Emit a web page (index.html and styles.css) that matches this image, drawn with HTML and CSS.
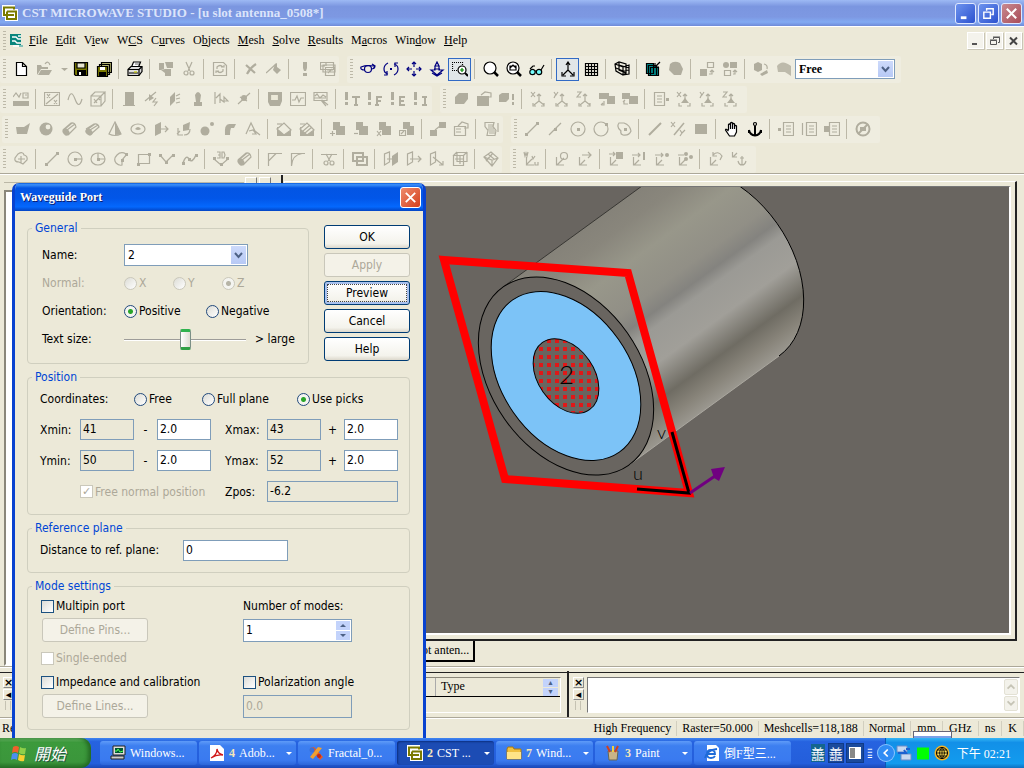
FILE: index.html
```html
<!DOCTYPE html>
<html lang="en">
<head>
<meta charset="utf-8">
<title>CST MICROWAVE STUDIO</title>
<link rel="stylesheet" href="styles.css">
</head>
<body>
<div class="app">
<header class="titlebar">
  <svg class="logo" viewBox="0 0 16 16"><path d="M0 0h13v4h3v12H3v-4H0z" fill="#fff"/><path d="M12 4.500V2.500H2v7.500h10M5 6.500v7.500h9V6.500H5" fill="none" stroke="#7b7a00" stroke-width="2"/></svg>
  <h1>CST MICROWAVE STUDIO - [u slot antenna_0508*]</h1>
  <button class="win-btn" aria-label="Minimize"><svg viewBox="0 0 16 16"><path d="M3 11h6v3H3z" fill="#fff"/></svg></button>
  <button class="win-btn" aria-label="Restore"><svg viewBox="0 0 16 16" fill="none" stroke="#fff" stroke-width="1.500"><path d="M6 5V3h7v6h-2M3 6.500h7V13H3z"/></svg></button>
  <button class="win-btn close" aria-label="Close"><svg viewBox="0 0 16 16" stroke="#fff" stroke-width="2.200"><path d="M3 3l10 10M13 3L3 13"/></svg></button>
</header>
<nav class="menubar">
  <span class="grip"></span>
  <svg class="doc-icon" viewBox="0 0 14 14"><path d="M0 0h11v11H0z" fill="#08857c"/><path d="M2 3h4l2 2h3M2 7h3l2 2h4M8 2h3M3 12h10" fill="none" stroke="#fff" stroke-width="1.300"/><path d="M9 12h4" stroke="#08857c"/></svg>
  <a href="#"><u>F</u>ile</a><a href="#"><u>E</u>dit</a><a href="#">V<u>i</u>ew</a><a href="#">W<u>C</u>S</a><a href="#">C<u>u</u>rves</a><a href="#">O<u>b</u>jects</a><a href="#"><u>M</u>esh</a><a href="#"><u>S</u>olve</a><a href="#"><u>R</u>esults</a><a href="#">M<u>a</u>cros</a><a href="#">Win<u>d</u>ow</a><a href="#"><u>H</u>elp</a>
  <div class="mdi-buttons">
    <button aria-label="Minimize document"><svg viewBox="0 0 12 12"><path d="M2 8h5v2H2z" fill="#555"/></svg></button>
    <button aria-label="Restore document"><svg viewBox="0 0 12 12" fill="none" stroke="#555"><path d="M4.500 4V2.500h6v5H9M4 2h7M1.500 5.500h6v4h-6zM1 5h7"/></svg></button>
    <button aria-label="Close document"><svg viewBox="0 0 12 12" stroke="#444" stroke-width="2"><path d="M2 2.500l7 7M9 2.500l-7 7"/></svg></button>
  </div>
</nav>

<div class="toolbars">
<div class="tool-row">
  <div class="toolbar"><span class="grip"></span>
    <button class="tb on" aria-label="New"><svg viewBox="0 0 16 16"><path d="M3.500 1.500h6l4 4v9h-10zM9.500 1.500v4h4" fill="#fff"/></svg></button>
    <button class="tb" disabled aria-label="Open"><svg viewBox="0 0 16 16"><path class="f" d="M1 4h4l1 2h6v2H5l-4 6z"/><path class="f" d="M5 9h11l-3 5H2z"/><path d="M9 3c2-3 4-2 5 1"/></svg></button>
    <button class="tb narrow" disabled aria-label="Open recent"><svg viewBox="0 0 16 16"><path class="f" d="M5 7h7l-3.500 3z"/></svg></button>
    <button class="tb on" aria-label="Save"><svg viewBox="0 0 16 16"><path d="M1.500 1.500h13v13h-12l-1-1z" fill="#7b7a00"/><path class="f" d="M4 9h9v6H4z"/><path d="M4 2h8v5H4z" fill="#e8e6d0"/><path d="M6 11h2v3H6z" fill="#fff" stroke="none"/></svg></button>
    <button class="tb on" aria-label="Save all"><svg viewBox="0 0 16 16"><path d="M5.500 1.500h10v10h-10zM3.500 3.500h10v10h-10z" fill="#b5b470"/><path d="M1.500 5.500h10v10h-10z" fill="#7b7a00"/><path class="f" d="M3 11h7v4H3z"/><path d="M4 6h5v3H4z" fill="#fff" stroke="none"/></svg></button>
    <i class="sep"></i>
    <button class="tb on" aria-label="Print"><svg viewBox="0 0 16 16"><path d="M4.500 6l2-5h7l-2 5" fill="#fff"/><path d="M1 8.500l3-3h11v5l-3 4H1z" fill="#ddd"/><path d="M1 8.500h11v6M12 8.500l3-3M2 12h9"/><path d="M7 11h3" stroke="#cc0"/><path d="M8 3h4" stroke-width=".6"/></svg></button>
    <i class="sep"></i>
    <button class="tb" disabled aria-label="Copy"><svg viewBox="0 0 16 16"><path class="f" d="M1 2h5v7H1zM7 1h8v6H9zM7 8h6v7H7zM3 9l4 3V8z"/></svg></button>
    <button class="tb" disabled aria-label="Cut"><svg viewBox="0 0 16 16"><path d="M5 1l4 9M11 1L7 10"/><circle cx="5" cy="12" r="2"/><circle cx="11" cy="12" r="2"/></svg></button>
    <i class="sep"></i>
    <button class="tb" disabled aria-label="Update"><svg viewBox="0 0 16 16"><path d="M1.500 1.500h10l3 3v10h-13zM5 8V6q3-3 6 0M11 8v2q-3 3-6 0M9 6h3V4M7 10H4v2"/></svg></button>
    <i class="sep"></i>
    <button class="tb" disabled aria-label="Delete"><svg viewBox="0 0 16 16"><path d="M3 4l9 8M13 3Q7 7 4 13" stroke-width="2.200"/></svg></button>
    <button class="tb" disabled aria-label="Rename"><svg viewBox="0 0 16 16"><path d="M0 12L10 3"/><path class="f" d="M9 3l2-1v4l4 3-4 4-4-4z"/></svg></button>
    <i class="sep"></i>
    <button class="tb" disabled aria-label="Information"><svg viewBox="0 0 16 16"><path class="f" d="M6 1h4v6l-1 3H7L6 7zM6 12h4v3H6z"/></svg></button>
    <button class="tb" disabled aria-label="Parameters"><svg viewBox="0 0 16 16"><path d="M.5 1.500h13v7H.5zM3 4h12v7H3zM5.500 6.500h9v8h-9zM7 9h6M8 12l4-4M1 5h4M6 2v3"/></svg></button>
  </div>
  <div class="toolbar"><span class="grip"></span>
    <button class="tb nav" aria-label="Rotate view"><svg viewBox="0 0 16 16"><circle cx="8" cy="8" r="3.500"/><path d="M5 9Q0 9 1 6q5-2 13-1M11 8q4 0 4-3M12 3l3 2-2 3"/></svg></button>
    <button class="tb nav" aria-label="Rotate in plane"><svg viewBox="0 0 16 16"><path d="M5 2Q1 4 1 8t4 5M11 14q4-2 4-6t-4-5M4 10v4H1M12 6V2h3"/><path d="M7 8h2" stroke-width="2"/></svg></button>
    <button class="tb nav" aria-label="Pan"><svg viewBox="0 0 16 16"><path d="M8 1v5M8 10v5M1 8h5M10 8h5M6 3l2-2 2 2M6 13l2 2 2-2M3 6L1 8l2 2M13 6l2 2-2 2"/></svg></button>
    <button class="tb nav" aria-label="Dynamic zoom"><svg viewBox="0 0 16 16"><path d="M6 5l2-4 2 4zM6 5v4H2l6 5 6-5h-4V5M5 8h6M3 12l5 3 5-3"/></svg></button>
    <button class="tb on active" aria-label="Zoom window"><svg viewBox="0 0 16 16"><path d="M0 1.500h11M0 9.500h5M.5 1v9M10.500 1v4" stroke-dasharray="1 1"/><circle cx="10" cy="9" r="4" fill="#fff"/><path d="M8 9h4M10 7v4" stroke="#080"/><path d="M13 12l3 3" stroke-width="2"/></svg></button>
    <i class="sep"></i>
    <button class="tb on" aria-label="Zoom"><svg viewBox="0 0 16 16"><circle cx="7" cy="7" r="6" fill="#fff"/><path d="M11 11l4 4" stroke-width="2.500"/></svg></button>
    <button class="tb on" aria-label="Reset view"><svg viewBox="0 0 16 16"><circle cx="7" cy="7" r="6" fill="#fff"/><path d="M4 5h6v4H4zM4 7l3-3 3 3"/><path d="M11 11l4 4" stroke-width="2.500"/></svg></button>
    <button class="tb on" aria-label="View options"><svg viewBox="0 0 16 16"><circle cx="3.500" cy="11" r="2.700" fill="#7ff"/><circle cx="10" cy="11" r="2.700" fill="#7ff"/><path d="M1 8l3-3h2M12 9l3-5M6 10h2"/></svg></button>
    <i class="sep"></i>
    <button class="tb on active" aria-label="Axes"><svg viewBox="0 0 16 16"><path d="M8 9V2M8 9l-5 5M8 9l5 5M6 4l2-3 2 3M2 11v4h4M14 11v4h-4"/></svg></button>
    <button class="tb on" aria-label="Working plane"><svg viewBox="0 0 16 16"><path d="M2.500 2v13M5.500 2v13M8.500 2v13M11.500 2v13M14.500 2v13M2 2.500h13M2 5.500h13M2 8.500h13M2 11.500h13M2 14.500h13"/></svg></button>
    <i class="sep"></i>
    <button class="tb on" aria-label="Mesh view"><svg viewBox="0 0 16 16"><path d="M1 3l4-2 7 2v9l-3 2-7-4zM5 1v8l7 3M1 3l8 3v8M9 6l6-2v9l-6 1M5 4l10 3M2 7l7 3 6-1M12 3v10"/></svg></button>
    <i class="sep"></i>
    <button class="tb on" aria-label="Cut plane"><svg viewBox="0 0 16 16"><path d="M1.500 2.500h7v10h-7zM3.500 4.500h8v10h-8zM5.500 6.500h8v8h-8z" fill="#088"/><path d="M15 1l-4 4M10 2v4h4"/></svg></button>
    <button class="tb" disabled aria-label="Shading"><svg viewBox="0 0 16 16"><path class="f" d="M2 3q4-4 10-1l3 6-2 6H6L1 9z"/></svg></button>
    <i class="sep"></i>
    <button class="tb" disabled aria-label="Move up"><svg viewBox="0 0 16 16"><path class="f" d="M1 8h7v7H1z"/><path d="M8.500 1.500h6v5h-6zM10 13h3V9M11 11l2-2 2 2"/></svg></button>
    <button class="tb" disabled aria-label="Move down"><svg viewBox="0 0 16 16"><circle class="f" cx="4" cy="4" r="3"/><path class="f" d="M8 1h7v6H8z"/><path d="M2.500 9.500h6v5h-6zM11 13h2V9M11 11l2-2 2 2"/></svg></button>
    <i class="sep"></i>
    <button class="tb" disabled aria-label="Rotate part"><svg viewBox="0 0 16 16"><path class="f" d="M1 3l4-2 4 2v6l-4 2-4-2zM7 13l7-4 1 3-6 3z"/><path d="M11 3q4 1 3 5"/></svg></button>
    <button class="tb" disabled aria-label="Transparent part"><svg viewBox="0 0 16 16"><path class="f h" d="M1 5q5-7 14 0v10L9 11H2z"/></svg></button>
    <span class="select tool-select"><select aria-label="Mode"><option>Free</option></select><svg viewBox="0 0 15 16"><path d="M4 6l3.500 4L11 6" /></svg></span>
  </div>
</div>

<div class="tool-row">
  <div class="toolbar"><span class="grip"></span>
    <button class="tb" disabled aria-label="Solver setup"><svg viewBox="0 0 16 16"><path class="f" d="M0 10h16v5H0z"/><path d="M0 6l3-4 3 4 2-4M10 2h5v5h-5zM12 4h2"/></svg></button>
    <i class="sep"></i>
    <button class="tb" disabled aria-label="Units"><svg viewBox="0 0 16 16"><path d="M.5 1.500h15v13H.5zM2 13L14 3M3 3l3 4M6 3L3 7M10 9l3 4M13 9l-3 4"/></svg></button>
    <button class="tb" disabled aria-label="Frequency"><svg viewBox="0 0 16 16"><path d="M1 9Q4-3 8 8t7 0"/></svg></button>
    <button class="tb" disabled aria-label="Boundaries"><svg viewBox="0 0 16 16"><path d="M1 5h10v10H1zM1 5l4-4h10l-4 4M15 1v9l-4 5M4 12l8-8M4 8l3 4M8 7l2 2"/></svg></button>
    <i class="sep"></i>
    <button class="tb" disabled aria-label="Waveguide port"><svg viewBox="0 0 16 16"><path class="f" d="M4 1h9v13H4zM2 14h12v1H2z"/></svg></button>
    <button class="tb" disabled aria-label="Discrete port"><svg viewBox="0 0 16 16"><path d="M1 10L12 1M12 7l-3 4h4l-3 4"/><path class="f" d="M5 3l5 4-5 3z"/></svg></button>
    <button class="tb" disabled aria-label="Plane wave"><svg viewBox="0 0 16 16"><path class="f" d="M3 6l5-5v9l-5 5z"/><path d="M9 5l4-2M9 8l4-1M9 12l4-1"/></svg></button>
    <button class="tb" disabled aria-label="Far field source"><svg viewBox="0 0 16 16"><path class="f" d="M5 4q3-6 6 0l-1 7h2v4H4v-4h2z"/></svg></button>
    <button class="tb" disabled aria-label="Monitor"><svg viewBox="0 0 16 16"><path d="M2 1v12M3 7l4-4v9M7 8l4 3V6l4 4h-4"/></svg></button>
    <button class="tb" disabled aria-label="Probe"><svg viewBox="0 0 16 16"><path d="M2 13L14 2M4 6l7 4"/><circle class="f" cx="8" cy="7" r="3"/></svg></button>
    <i class="sep"></i>
    <button class="tb" disabled aria-label="Simulation"><svg viewBox="0 0 16 16"><path class="f" d="M1 1h14v9l-2 5H3l-2-4z"/><path d="M3.500 3.500h8v6h-8z" fill="#ece9d8"/></svg></button>
    <button class="tb" disabled aria-label="Signal"><svg viewBox="0 0 16 16"><path d="M.5 1.500h15v13H.5zM2 9h3l2-4 2 6 2-4h3"/></svg></button>
    <button class="tb" disabled aria-label="Optimizer"><svg viewBox="0 0 16 16"><path d="M1 1.500h13v8H1zM2 5l2-2 3 4 3-3 3 2M1 7h12M9 9l6 5M8 9l5 6"/></svg></button>
    <i class="sep"></i>
    <button class="tb" disabled aria-label="Transient solver"><svg viewBox="0 0 16 16"><path class="f" d="M1 1h3v8H1zM1 11h3v3H1z"/><path d="M8 6h8M12 6v8M10 14h4" stroke-width="2"/></svg></button>
    <button class="tb" disabled aria-label="Frequency solver"><svg viewBox="0 0 16 16"><path class="f" d="M1 1h3v8H1zM1 11h3v3H1z"/><path d="M10 14V6h5M10 10h4M8 14h4" stroke-width="2"/></svg></button>
    <button class="tb" disabled aria-label="Eigenmode solver"><svg viewBox="0 0 16 16"><path class="f" d="M1 1h3v8H1zM1 11h3v3H1z"/><path d="M15 14h-5V6h5M10 10h4" stroke-width="2"/></svg></button>
    <button class="tb" disabled aria-label="Integral solver"><svg viewBox="0 0 16 16"><path class="f" d="M1 1h3v8H1zM1 11h3v3H1z"/><path d="M9 6h5M12 6v8M9 14h5" stroke-width="2"/></svg></button>
  </div>
  <div class="toolbar"><span class="grip"></span>
    <button class="tb" disabled aria-label="Brick material"><svg viewBox="0 0 16 16"><path class="f" d="M2 6l4-4h9v6l-4 5H2z"/></svg></button>
    <button class="tb" disabled aria-label="Material properties"><svg viewBox="0 0 16 16"><path class="f" d="M1 5h12v10H1z"/><path d="M5 4l4-3 6 1v4h-4"/></svg></button>
    <button class="tb" disabled aria-label="Material info"><svg viewBox="0 0 16 16"><path class="f" d="M0 4l3-2h7v6l-3 3H0zM13 3h2v6h-2zM13 11h2v3h-2z"/></svg></button>
    <i class="sep"></i>
    <button class="tb" disabled aria-label="View X"><svg viewBox="0 0 16 16"><path d="M1 1l4 5M5 1L1 6M9 10V3M9 10l-5 4M9 10l5 4M7 5l2-2 2 2M3 12v3h3M14 12v3h-3"/></svg></button>
    <button class="tb" disabled aria-label="View Y"><svg viewBox="0 0 16 16"><path d="M1 1l2 3 2-3M3 3L1 7M9 10V3M9 10l-5 4M9 10l5 4M7 5l2-2 2 2M3 12v3h3M14 12v3h-3"/></svg></button>
    <button class="tb" disabled aria-label="View Z"><svg viewBox="0 0 16 16"><path d="M1 1h4L1 6h4M9 10V3M9 10l-5 4M9 10l5 4M7 5l2-2 2 2M3 12v3h3M14 12v3h-3"/></svg></button>
    <button class="tb" disabled aria-label="Align front"><svg viewBox="0 0 16 16"><path class="f" d="M0 2h10v3h6v8H8V8H0z"/><path d="M5 10v4H2M4 12l-2 2"/></svg></button>
    <button class="tb" disabled aria-label="Align back"><svg viewBox="0 0 16 16"><path class="f" d="M0 2h8v3h8v8H7V8H0z"/><path d="M6 13H2v-3M1 11l2-2"/></svg></button>
    <i class="sep"></i>
    <button class="tb" disabled aria-label="History"><svg viewBox="0 0 16 16"><path d="M1.500 1.500h10v13h-10zM4 5h5M4 8h5M4 11h5"/><path class="f" d="M13 7h3v3h-3z"/></svg></button>
    <button class="tb" disabled aria-label="Field X"><svg viewBox="0 0 16 16"><path d="M1 1l4 5M5 1L1 6M9 10V3M7 5l2-2 2 2M3 12v3h3M14 12v3h-3"/><path class="f" d="M5 12l4-5 4 5z"/></svg></button>
    <button class="tb" disabled aria-label="Field Y"><svg viewBox="0 0 16 16"><path d="M1 1l2 3 2-3M3 3L1 7M9 10V3M7 5l2-2 2 2M3 12v3h3M14 12v3h-3"/><path class="f" d="M5 12l4-5 4 5z"/></svg></button>
    <button class="tb" disabled aria-label="Field Z"><svg viewBox="0 0 16 16"><path d="M1 1h4L1 6h4M9 10V3M7 5l2-2 2 2M3 12v3h3M14 12v3h-3"/><path class="f" d="M5 12l4-5 4 5z"/></svg></button>
  </div>
</div>

<div class="tool-row inset">
  <div class="toolbar"><span class="grip"></span>
    <button class="tb" disabled aria-label="Brick"><svg viewBox="0 0 16 16"><path class="f" d="M1 6h8l6-4-3 11H2z"/></svg></button>
    <button class="tb" disabled aria-label="Sphere"><svg viewBox="0 0 16 16"><circle class="f" cx="8" cy="8" r="6.500"/><circle cx="10" cy="6" r="3" fill="#efede0"/></svg></button>
    <button class="tb" disabled aria-label="Cylinder"><svg viewBox="0 0 16 16"><path d="M2 9l8-7q4-1 5 4l-8 8M4 8l7-6M6 9l8-6"/><ellipse class="f" cx="5" cy="11" rx="3" ry="4" transform="rotate(-40 5 11)"/></svg></button>
    <button class="tb" disabled aria-label="Elliptical cylinder"><svg viewBox="0 0 16 16"><path d="M2 8l8-5q4-1 5 3l-8 7M4 8l7-5M6 9l8-5"/><ellipse class="f" cx="5" cy="11" rx="4" ry="3" transform="rotate(40 5 11)"/></svg></button>
    <button class="tb" disabled aria-label="Cone"><svg viewBox="0 0 16 16"><path d="M8 1L2 13q6 3 12 0z"/><path class="f" d="M8 1v13q4 0 6-1z"/></svg></button>
    <button class="tb" disabled aria-label="Torus"><svg viewBox="0 0 16 16"><ellipse cx="8" cy="8" rx="7" ry="5"/><path class="f" d="M5 8q3-4 6 0-3 2-6 0z"/></svg></button>
    <button class="tb" disabled aria-label="Extrude"><svg viewBox="0 0 16 16"><path class="f" d="M2 4l6-3v11l-6 3z"/><path d="M8 8h7M12 5l3 3-3 3"/></svg></button>
    <button class="tb" disabled aria-label="Rotate profile"><svg viewBox="0 0 16 16"><path class="f" d="M7 4l7-3-1 8-6 1z"/><path d="M2 7v7h5M1 13l3-3M14 8q0 6-6 6"/></svg></button>
    <button class="tb" disabled aria-label="Loft"><svg viewBox="0 0 16 16"><circle class="f" cx="6" cy="10" r="4.500"/><circle class="f" cx="13" cy="3" r="2"/></svg></button>
    <button class="tb" disabled aria-label="Bend"><svg viewBox="0 0 16 16"><path class="f" d="M3 14Q2 2 8 3h6l-2 4H9q-1 2-1 7z"/></svg></button>
    <button class="tb" disabled aria-label="Bondwire"><svg viewBox="0 0 16 16"><path d="M1 13L6 2l4 8 5 4M4 10l4-1 3 4H7"/></svg></button>
    <i class="sep"></i>
    <button class="tb" disabled aria-label="Chamfer"><svg viewBox="0 0 16 16"><path class="f" d="M1 6v9h14V8z"/><path d="M1 8l7-6 7 7-7 5z" fill="#efede0"/><path d="M1 3h5"/></svg></button>
    <button class="tb" disabled aria-label="Blend"><svg viewBox="0 0 16 16"><path class="f" d="M1 6v9h14V8z"/><path d="M1 8l7-6 7 7-7 5z" fill="#efede0"/><path d="M4 10l7-6M6 12l7-6M1 3h5"/></svg></button>
    <i class="sep"></i>
    <button class="tb" disabled aria-label="Boolean add"><svg viewBox="0 0 16 16"><path class="f" d="M3 1h7v4h5v9H6V9H3z"/><path d="M0 12.500h5M2.500 10v5"/></svg></button>
    <button class="tb" disabled aria-label="Boolean subtract"><svg viewBox="0 0 16 16"><path class="f" d="M3 1h7v4h5v9H6V9H3z"/><path d="M1 12.500h4"/></svg></button>
    <button class="tb" disabled aria-label="Boolean intersect"><svg viewBox="0 0 16 16"><path class="f" d="M3 1h7v4h5v9H6V9H3z"/><path d="M1 10l4 5M5 10l-4 5"/></svg></button>
    <button class="tb" disabled aria-label="Boolean insert"><svg viewBox="0 0 16 16"><path class="f" d="M4 1h7v4h4v9H8V8H4z"/><path d="M.5 9.500h6v5h-6zM2 13l3-3"/></svg></button>
    <i class="sep"></i>
    <button class="tb" disabled aria-label="Transform"><svg viewBox="0 0 16 16"><path class="f" d="M0 9h7v6H0zM9 1h7v6H9z"/><path d="M5 9l5-4"/></svg></button>
    <button class="tb" disabled aria-label="Object properties"><svg viewBox="0 0 16 16"><path d="M1.500 5.500h11v9h-11zM3 8h5M3 11h5M5 5l4-4 6 2v4h-4"/></svg></button>
    <i class="sep"></i>
    <button class="tb" disabled aria-label="History list"><svg viewBox="0 0 16 16"><path d="M1 1.500h9l-1 4 3 4-1 5H3l1-5-3-4zM4 4h5M4 6h5M4 8h6M5 10h6M5 12h6M14 2v9"/></svg></button>
  </div>
  <div class="toolbar"><span class="grip"></span>
    <button class="tb" disabled aria-label="Pick edge"><svg viewBox="0 0 16 16"><path d="M2 14L14 2"/><path class="f" d="M1 12h3v3H1zM12 1h3v3h-3z"/></svg></button>
    <button class="tb" disabled aria-label="Pick midpoint"><svg viewBox="0 0 16 16"><path d="M2 14L14 2"/><path class="f" d="M7 7h3v3H7z"/></svg></button>
    <button class="tb" disabled aria-label="Pick centre"><svg viewBox="0 0 16 16"><circle cx="8" cy="8" r="7"/><path class="f" d="M7 7h3v3H7z"/></svg></button>
    <button class="tb" disabled aria-label="Pick circle point"><svg viewBox="0 0 16 16"><circle cx="8" cy="8" r="7"/><path class="f" d="M12 2h3v3h-3z"/></svg></button>
    <button class="tb" disabled aria-label="Pick face centre"><svg viewBox="0 0 16 16"><path d="M3 2h5q6 2 7 8-2 5-8 4-3-1-2-4Q0 6 3 2z"/><path class="f" d="M8 7h3v3H8z"/></svg></button>
    <i class="sep"></i>
    <button class="tb" disabled aria-label="Pick line"><svg viewBox="0 0 16 16"><path d="M2 14L14 2" stroke-width="2"/></svg></button>
    <button class="tb" disabled aria-label="Pick coordinate"><svg viewBox="0 0 16 16"><path d="M4 14L14 2" stroke-width="1.500"/><path d="M1 1l4 5M5 1L1 6M10 9l2 3 3-3M12 12l-2 3"/></svg></button>
    <button class="tb" disabled aria-label="Pick face"><svg viewBox="0 0 16 16"><path class="f" d="M2 3h12v10H2z"/></svg></button>
    <i class="sep"></i>
    <button class="tb on" aria-label="Pick by hand"><svg viewBox="0 0 16 16"><path d="M4.500 9V3.500q1-1 2 0V2q1-1 2 0v1q1-1 2 0v2q1-1 2 0v6l-2 4h-5L1.500 9q0-2 3 1M6.500 3v5M8.500 3v5M10.500 4v4" fill="#fff"/></svg></button>
    <button class="tb on" aria-label="Anchor"><svg viewBox="0 0 16 16"><circle cx="8" cy="3" r="1.500"/><path d="M8 5v9M2 9q1 5 6 5.500Q13 14 14 9M2 9v3M14 9v3" stroke-width="2"/></svg></button>
    <i class="sep"></i>
    <button class="tb" disabled aria-label="Point list"><svg viewBox="0 0 16 16"><path d="M5.500 1.500h10v13h-10zM8 5h5M8 8h5M8 11h5"/><path class="f" d="M0 7h3v3H0z"/></svg></button>
    <button class="tb" disabled aria-label="Edge list"><svg viewBox="0 0 16 16"><path d="M5.500 1.500h10v13h-10zM8 5h5M8 8h5M8 11h5M1.500 2v12"/></svg></button>
    <button class="tb" disabled aria-label="Face list"><svg viewBox="0 0 16 16"><path d="M5.500 1.500h10v13h-10zM8 5h5M8 8h5M8 11h5"/><path class="f" d="M0 5h6v6H0z"/></svg></button>
    <i class="sep"></i>
    <button class="tb" disabled aria-label="Clear picks"><svg viewBox="0 0 16 16"><circle cx="8" cy="8" r="6.500" stroke-width="2"/><path d="M3 13L13 3" stroke-width="2"/><path class="f" d="M5 6h6v4H5z"/></svg></button>
  </div>
</div>

<div class="tool-row">
  <div class="toolbar"><span class="grip"></span>
    <button class="tb" disabled aria-label="New curve"><svg viewBox="0 0 16 16"><path d="M5 3q5-3 6 1 4 1 3 5l-4 4-4-2q-5 0-4-4zM8 5v7M5 8h7"/></svg></button>
    <i class="sep"></i>
    <button class="tb" disabled aria-label="Line"><svg viewBox="0 0 16 16"><path d="M2 14L14 2"/><path class="f" d="M1 12h3v3H1zM12 1h3v3h-3z"/></svg></button>
    <button class="tb" disabled aria-label="Circle"><svg viewBox="0 0 16 16"><circle cx="8" cy="8" r="7"/><path d="M8 8h7"/><path class="f" d="M7 7h3v3H7z"/></svg></button>
    <button class="tb" disabled aria-label="Ellipse"><svg viewBox="0 0 16 16"><ellipse cx="8" cy="8" rx="7" ry="6"/><path d="M8 2v6h7"/><path class="f" d="M7 7h3v3H7z"/></svg></button>
    <button class="tb" disabled aria-label="Arc"><svg viewBox="0 0 16 16"><path d="M13 3Q8 0 4 4T3 12q3 3 6 2V9l5-6"/><path class="f" d="M12 2h3v3h-3zM8 8h3v3H8z"/></svg></button>
    <button class="tb" disabled aria-label="Rectangle"><svg viewBox="0 0 16 16"><path d="M2.500 3.500h11v9h-11z"/><path class="f" d="M1 12h3v3H1zM12 2h3v3h-3z"/></svg></button>
    <button class="tb" disabled aria-label="Polygon"><svg viewBox="0 0 16 16"><path d="M1 4l6 7 7-7"/><path class="f" d="M0 3h3v3H0zM6 10h3v3H6zM13 3h3v3h-3z"/></svg></button>
    <button class="tb" disabled aria-label="Spline"><svg viewBox="0 0 16 16"><path d="M1 12q3-9 6-4t7-4" stroke-width="1.500"/><path class="f" d="M0 11h3v3H0zM6 7h3v3H6zM13 3h3v3h-3z"/></svg></button>
    <i class="sep"></i>
    <button class="tb" disabled aria-label="3D polygon"><svg viewBox="0 0 16 16"><path d="M1 8l7 6 7-6M4 1h3v6H4M5 4h2M9 1h2l1 3-1 3H9z"/><path class="f" d="M0 6h3v3H0zM7 12h3v3H7zM13 6h3v3h-3z"/></svg></button>
    <button class="tb" disabled aria-label="Trace from curve"><svg viewBox="0 0 16 16"><path d="M2 9l8-7q4-1 5 4l-8 8M4 8l7-6M6 9l8-6"/><ellipse class="f" cx="5" cy="11" rx="3" ry="4" transform="rotate(-40 5 11)"/></svg></button>
    <i class="sep"></i>
    <button class="tb" disabled aria-label="Chamfer curve"><svg viewBox="0 0 16 16"><path d="M1.500 15V2.500H15M1.500 10L9 2.500"/></svg></button>
    <button class="tb" disabled aria-label="Blend curve"><svg viewBox="0 0 16 16"><path d="M1.500 15V2.500H15M1.500 15Q2 4 12 2.500"/></svg></button>
    <i class="sep"></i>
    <button class="tb" disabled aria-label="Trim curves"><svg viewBox="0 0 16 16"><path d="M0 3.500h16M5 3l4 7M11 3L7 10"/><circle cx="5" cy="12" r="2"/><circle cx="11" cy="12" r="2"/></svg></button>
    <i class="sep"></i>
    <button class="tb" disabled aria-label="Merge curves"><svg viewBox="0 0 16 16"><path d="M1 2h10v8H1zM5 6h10v8H5z" stroke-width="2"/></svg></button>
    <i class="sep"></i>
    <button class="tb" disabled aria-label="Mirror"><svg viewBox="0 0 16 16"><path d="M1.500 3v11l5-3V1zM4 8h8"/><path class="f" d="M9 5l6-4v10l-6 4z"/></svg></button>
    <button class="tb" disabled aria-label="Translate"><svg viewBox="0 0 16 16"><path d="M1.500 3v11l5-3V1zM4 8h11M12 5l3 3-3 3"/></svg></button>
    <button class="tb" disabled aria-label="Move local"><svg viewBox="0 0 16 16"><path d="M1.500 3v11l5-3V1zM4 6l10 8M14 10v4h-4"/></svg></button>
    <button class="tb" disabled aria-label="Scale"><svg viewBox="0 0 16 16"><path d="M1.500 4.500h10v10h-10zM5 1.500h10v9H5zM1 5l4-4M11 5l4-4M3 8h9M8 5v8"/></svg></button>
    <i class="sep"></i>
    <button class="tb" disabled aria-label="Box"><svg viewBox="0 0 16 16"><path d="M1 6l7-5 7 6-6 8zM1 6l8 3 6-2M9 9v6M5 3l6 5M3 10l7-8"/></svg></button>
  </div>
  <div class="toolbar"><span class="grip"></span>
    <button class="tb" disabled aria-label="Local coordinates"><svg viewBox="0 0 16 16"><path d="M1 1l1 4 1-3 1 3 1-4M3.500 6v8H11M4 13l5-5M9 5l1 3 2-3M12 11v3h3v-3"/></svg></button>
    <i class="sep"></i>
    <button class="tb" disabled aria-label="Rotate WCS"><svg viewBox="0 0 16 16"><path d="M2.500 6v8H10M3 14l7-7"/><circle cx="10" cy="5" r="3.500"/></svg></button>
    <button class="tb" disabled aria-label="Move WCS"><svg viewBox="0 0 16 16"><path d="M2.500 6v8H10M3 14l5-5M5 4h9M11 1l3 3-3 3"/></svg></button>
    <i class="sep"></i>
    <button class="tb" disabled aria-label="Align to face"><svg viewBox="0 0 16 16"><path d="M2.500 6v8H10M3 14l5-5M1 3h6M5 1l2 2-2 2"/><path class="f" d="M8 1h7v7H8z"/></svg></button>
    <button class="tb" disabled aria-label="Align to edge"><svg viewBox="0 0 16 16"><path d="M2.500 6v8H10M3 14l5-5M1 4h8M7 2l2 2-2 2"/><path class="f" d="M12 1h2v8h-2z"/></svg></button>
    <button class="tb" disabled aria-label="Align to point"><svg viewBox="0 0 16 16"><path d="M2.500 6v8H10M3 14l5-5M1 4h8M7 2l2 2-2 2"/><circle class="f" cx="13" cy="4" r="2"/></svg></button>
    <button class="tb" disabled aria-label="Align to three points"><svg viewBox="0 0 16 16"><path d="M2.500 6v8H10M3 14l5-5M1 4h6"/><circle class="f" cx="9" cy="3" r="2"/><circle class="f" cx="14" cy="6" r="2"/><circle class="f" cx="9" cy="8" r="2"/></svg></button>
    <i class="sep"></i>
    <button class="tb" disabled aria-label="Restore WCS"><svg viewBox="0 0 16 16"><path d="M2.500 6v8H10M3 14l5-5M5 1v4h4M5 4q5-5 9 1l-2 4"/></svg></button>
    <button class="tb" disabled aria-label="Anchor WCS"><svg viewBox="0 0 16 16"><path d="M1.500 1v5H6M2 6l4-4M11 5v9M7 10q1 4 4 4t4-4M9 7h4"/></svg></button>
  </div>
</div>
</div>

<main class="workspace">
  <aside class="tree">
    <div class="dock-head"><button aria-label="Dock">&nbsp;</button><button aria-label="Close panel">&nbsp;</button></div>
    <div class="tree-list"></div>
  </aside>
  <section class="mdi">
    <div class="frame">
    <svg class="viewport" viewBox="287 187 722 446" preserveAspectRatio="xMinYMin slice" role="img" aria-label="Coaxial waveguide port, 3D view">
      <defs>
        <linearGradient id="metal" gradientUnits="userSpaceOnUse" x1="503" y1="287" x2="631" y2="463">
          <stop offset="0" stop-color="#858279"/><stop offset=".1" stop-color="#89867c"/><stop offset=".25" stop-color="#98978a"/><stop offset=".42" stop-color="#918f86"/><stop offset=".5" stop-color="#84837f"/><stop offset=".56" stop-color="#9b9a95"/><stop offset=".7" stop-color="#a19f99"/><stop offset=".84" stop-color="#6f6c63"/><stop offset=".93" stop-color="#88847a"/><stop offset="1" stop-color="#9a978f"/>
        </linearGradient>
        <pattern id="dots" x="539" y="347" width="8" height="8" patternUnits="userSpaceOnUse"><rect width="8" height="8" fill="#696560"/><rect width="4" height="4" fill="#e01818"/></pattern>
        <clipPath id="core"><ellipse rx="41" ry="28" transform="translate(566 376) rotate(55)"/></clipPath>
      </defs>
      <rect x="0" y="0" width="2400" height="1800" fill="#696560"/>
      <path d="M503 287L653 178A109 75 55 0 1 779 356L629 465Z" fill="url(#metal)"/>
      <path d="M503 287L653 178" stroke="#383733" fill="none"/>
      <path d="M653 178A109 75 55 0 1 779 356" stroke="#000" fill="none"/>
      <path d="M779 356L629 465" stroke="#aaa79f" fill="none"/>
      <g stroke="#000" transform="translate(566 376) rotate(55)">
        <ellipse rx="109" ry="75" fill="#696560"/>
        <ellipse rx="93" ry="64" fill="#7cc3f7"/>
      </g>
      <rect x="530" y="335" width="72" height="82" fill="url(#dots)" clip-path="url(#core)"/>
      <ellipse rx="41" ry="28" fill="none" stroke="#000" transform="translate(566 376) rotate(55)"/>
      <path d="M444 260L628 273L689 493L505 479Z" fill="none" stroke="#f00" stroke-width="8"/>
      <path d="M672 432L689 493L637 489" fill="none" stroke="#000" stroke-width="3"/>
      <path d="M690 493L715 476" stroke="#700080" stroke-width="3"/><path d="M711 469L725 467L719 481L714 478Z" fill="#700080"/>
      <text x="559" y="384" class="mark big">2</text><text x="633" y="480" class="mark">u</text><text x="657" y="439" class="mark">v</text>
    </svg>
    </div>
    <div class="mdi-tabs"><button>u slot anten...</button></div>
  </section>
</main>

<section class="bottom-dock">
  <div class="dock-tools"><button aria-label="Close list">×</button><button aria-label="Collapse list">◂</button><span></span></div>
  <div class="param-list">
    <table><thead><tr><th class="c-name">Name</th><th>Type</th></tr></thead></table>
    <div class="mini-spin"><button aria-label="Scroll up">▴</button><button aria-label="Scroll down">▾</button></div>
  </div>
  <div class="log-dock">
    <div class="dock-tools"><button aria-label="Close log">×</button><button aria-label="Collapse log">◂</button><span></span></div>
    <div class="log"><div class="log-scroll"><button aria-label="Log up"><svg viewBox="0 0 14 14"><path d="M3 9l4-4 4 4"/></svg></button><button aria-label="Log down"><svg viewBox="0 0 14 14"><path d="M3 5l4 4 4-4"/></svg></button></div></div>
  </div>
</section>

<footer class="status">
  <span class="ready">Ready</span><span>High Frequency</span><span>Raster=50.000</span><span>Meshcells=118,188</span><span>Normal</span><span class="unit">mm</span><span class="unit">GHz</span><span class="unit">ns</span><span class="unit">K</span>
  <i class="lang-bar"></i>
</footer>

<div class="taskbar">
  <button class="start"><svg viewBox="0 0 20 18"><path d="M3 3q3-2 6 0L8 9Q5 7 2 9z" fill="#f0602c"/><path d="M10 3q3 2 6 1l-1 6q-3 1-6-1z" fill="#8fd04a"/><path d="M2 10q3-2 6 0l-1 6q-3-2-6 0z" fill="#4c8ff0"/><path d="M9 10q3 2 6 1l-1 6q-3 1-6-1z" fill="#f8d030"/></svg>開始</button>
  <div class="tasks">
    <button><svg viewBox="0 0 16 16"><path d="M3 1h12v9H3z" fill="#ddd" stroke="#222"/><path d="M5 3h8v5H5z" fill="#053"/><path d="M5 6h2l1-2 2 3 3-1" stroke="#5f5" fill="none"/><path d="M1 11h13v3H1z" fill="#ccc" stroke="#222"/></svg><span>Windows...</span></button>
    <button><svg viewBox="0 0 16 16"><path d="M1 0h10l4 4v12H1z" fill="#fff"/><path d="M2 13q6-3 6-9 1 5 6 6-6-1-12 3" fill="none" stroke="#d01818" stroke-width="1.300"/></svg><b>4</b><span>Adob...</span><i></i></button>
    <button><svg viewBox="0 0 16 16"><path d="M2 3l4-1 9 10-3 3z" fill="#e85820"/><path d="M14 3l-4-1-8 10 3 2z" fill="#f0a030"/><circle cx="4" cy="5" r="2.500" fill="#3a70d8"/><circle cx="11" cy="11" r="2" fill="#c02818"/></svg><span>Fractal_0...</span></button>
    <button class="current"><svg viewBox="0 0 16 16"><path d="M0 0h13v4h3v12H3v-4H0z" fill="#fff"/><path d="M12 4.500V2.500H2v7.500h10M5 6.500v7.500h9V6.500H5" fill="none" stroke="#7b7a00" stroke-width="2"/></svg><b>2</b><span>CST ...</span><i></i></button>
    <button><svg viewBox="0 0 16 16"><path d="M1 4l1-2h5l1 2h7v10H1z" fill="#f0c040" stroke="#a87810"/><path d="M1 7h14v7H1z" fill="#ffe488"/></svg><b>7</b><span>Wind...</span><i></i></button>
    <button><svg viewBox="0 0 16 16"><path d="M3 6h10l-1 9H4z" fill="#c8b488" stroke="#665"/><path d="M5 7L2 1M8 7V1M10 7l3-6" stroke-width="2" stroke="#d04020"/><path d="M8 7V1" stroke="#f0d040" stroke-width="2"/></svg><b>3</b><span>Paint</span><i></i></button>
    <button><svg viewBox="0 0 16 16"><path d="M3 0h9l3 3v13H3z" fill="#fff"/><path d="M3 9h8q0-4-4-4T3 9t4 4q3 0 4-2M1 13Q3 5 13 4" fill="none" stroke="#1e6ad8" stroke-width="1.800"/></svg><span>倒F型三...</span></button>
  </div>
  <div class="ime">
    <span class="teal">譱</span><span class="framed">譱</span>
    <svg viewBox="0 0 16 16" class="framed"><path d="M2 2h12v12H2z" fill="#fff"/><path d="M3 3h5v10H3z" fill="#888"/></svg>
    <svg viewBox="0 0 8 16" class="lines"><path d="M1 3h6M1 7h6M1 11h6M1 14h6" stroke="#fff" stroke-width="1.500"/></svg>
  </div>
  <div class="tray">
    <button class="expand" aria-label="Show hidden icons"><svg viewBox="0 0 16 16"><path d="M10 4L6 8l4 4" fill="none" stroke="#fff" stroke-width="2"/></svg></button>
    <svg viewBox="0 0 16 16"><path d="M1 1h10v6H1zM5 9h10v6H5z" fill="#c8d8f0" stroke="#6b8bc8"/><path d="M2 8h8l-2-3M14 4h-4" fill="none" stroke="#1c60d0" stroke-width="2"/></svg>
    <svg viewBox="0 0 12 12" class="green"><path d="M0 0h12v12H0z" fill="#0f0"/></svg>
    <svg viewBox="0 0 16 16"><circle cx="8" cy="8" r="7.500" fill="#f0b428"/><circle cx="8" cy="8" r="5.500" fill="#fd5" stroke="#000"/><path d="M2 8h12M8 2v12M3 5h10M3 11h10M8 2q-5 6 0 12M8 2q5 6 0 12" fill="none" stroke="#000" stroke-width=".8"/></svg>
    <time>下午 02:21</time>
  </div>
</div>
</div>

<form class="dialog" onsubmit="return false">
  <div class="dlg-title"><h2>Waveguide Port</h2><button type="button" class="dlg-close" aria-label="Close dialog"><svg viewBox="0 0 16 16" stroke="#fff" stroke-width="2"><path d="M3 3l10 10M13 3L3 13"/></svg></button></div>
  <div class="dlg-body">
    <div class="top-part">
      <fieldset class="general"><legend>General</legend>
        <div class="row"><label class="lead" for="name">Name:</label><span class="select name-select"><select id="name"><option>2</option></select><svg viewBox="0 0 15 16"><path d="M4 6l3.500 4L11 6"/></svg></span></div>
        <div class="row off"><span class="lead">Normal:</span><label class="opt w50"><input type="radio" name="n" disabled>X</label><label class="opt w50"><input type="radio" name="n" disabled>Y</label><label class="opt"><input type="radio" name="n" disabled checked>Z</label></div>
        <div class="row"><span class="lead">Orientation:</span><label class="opt w82"><input type="radio" name="o" checked>Positive</label><label class="opt"><input type="radio" name="o">Negative</label></div>
        <div class="row"><label class="lead" for="ts">Text size:</label><input id="ts" type="range"><span class="large">&gt; large</span></div>
      </fieldset>
      <div class="actions"><button>OK</button><button disabled>Apply</button><button class="default">Preview</button><button>Cancel</button><button>Help</button></div>
    </div>
    <fieldset class="position"><legend>Position</legend>
      <div class="row"><span class="lead">Coordinates:</span><label class="opt w68"><input type="radio" name="c">Free</label><label class="opt w95"><input type="radio" name="c">Full plane</label><label class="opt"><input type="radio" name="c" checked>Use picks</label></div>
      <div class="coords">
        <label for="xmin">Xmin:</label><input id="xmin" type="text" value="41" readonly><span class="op">-</span><input type="text" value="2.0" aria-label="Xmin margin">
        <label class="c6" for="xmax">Xmax:</label><input id="xmax" type="text" value="43" readonly><span class="op">+</span><input type="text" value="2.0" aria-label="Xmax margin">
        <label for="ymin">Ymin:</label><input id="ymin" type="text" value="50" readonly><span class="op">-</span><input type="text" value="2.0" aria-label="Ymin margin">
        <label class="c6" for="ymax">Ymax:</label><input id="ymax" type="text" value="52" readonly><span class="op">+</span><input type="text" value="2.0" aria-label="Ymax margin">
        <label class="opt off free"><input type="checkbox" checked disabled>Free normal position</label>
        <label class="c6" for="zpos">Zpos:</label><input id="zpos" class="wide" type="text" value="-6.2" readonly>
      </div>
    </fieldset>
    <fieldset class="refplane"><legend>Reference plane</legend>
      <div class="row"><label for="dist">Distance to ref. plane:</label><input id="dist" type="text" value="0"></div>
    </fieldset>
    <fieldset class="modes"><legend>Mode settings</legend>
      <div class="modes-grid">
      <label class="opt"><input type="checkbox">Multipin port</label><label for="nmodes">Number of modes:</label>
      <button disabled>Define Pins...</button>
      <span class="spin"><input id="nmodes" type="text" value="1"><span class="arrows"><button type="button" aria-label="More modes"><svg viewBox="0 0 14 9"><path d="M4 6l3-3 3 3z"/></svg></button><button type="button" aria-label="Fewer modes"><svg viewBox="0 0 14 9"><path d="M4 3l3 3 3-3z"/></svg></button></span></span>
      <label class="opt off"><input type="checkbox" disabled>Single-ended</label><span></span>
      <label class="opt"><input type="checkbox">Impedance and calibration</label><label class="opt"><input type="checkbox">Polarization angle</label>
      <button disabled>Define Lines...</button><input class="angle" type="text" value="0.0" disabled aria-label="Polarization angle value">
      </div>
    </fieldset>
  </div>
</form>
</body>
</html>
```
FILE: styles.css
```css
* { box-sizing: border-box; }
body {
  margin: 0;
  height: 100vh;
  overflow: hidden;
  position: relative;
  background: #ece9d8;
  color: #000;
  font: 12px "Liberation Serif", "Noto Sans CJK TC", serif;
}
button, input, select { font: inherit; color: inherit; margin: 0; }
button { padding: 0; }
h1, h2 { margin: 0; }
.app { display: flex; flex-direction: column; height: 100%; }

/* title bar */
.titlebar {
  height: 26px; flex: none; display: flex; align-items: center; gap: 2px; padding: 0 2px;
  background: linear-gradient(#9db9f4, #7b96e0 25%, #7d98e2 65%, #82aaf2 85%, #6f8ad8);
}
.titlebar h1 { flex: 1; font-size: 13px; font-weight: bold; color: #dbe4fb; padding-left: 2px; white-space: nowrap; }
.logo { width: 16px; height: 16px; }
.win-btn { width: 21px; height: 21px; border: 1px solid #dfe8ff; border-radius: 3px; background: linear-gradient(135deg, #6d93ee, #2b51cf); display: grid; place-items: center; }
.win-btn svg { width: 15px; height: 15px; }
.win-btn.close { background: linear-gradient(135deg, #c88a90, #a94c58); }

/* menu */
.menubar { height: 28px; flex: none; display: flex; align-items: center; padding: 0 2px 0 3px; border-top: 1px solid #fff; }
.menubar a { color: #000; text-decoration: none; padding: 0 4px; }
.doc-icon { width: 14px; height: 14px; margin: 0 1px 0 4px; }
.mdi-buttons { margin-left: auto; display: flex; gap: 2px; }
.mdi-buttons button { width: 17px; height: 17px; border: 1px solid #fff; background: #f4f3ec; box-shadow: 1px 1px #c9c6b6; display: grid; place-items: center; }
.mdi-buttons svg { width: 12px; height: 12px; }
.grip { width: 3px; height: 20px; flex: none; background: repeating-linear-gradient(#bdb9a8 0 1px, transparent 1px 3px); }

/* toolbars */
.toolbars { border-bottom: 1px solid #aca899; height: 120px; flex: none; }
.tool-row { display: flex; height: 30px; align-items: center; gap: 8px; }
.tool-row.inset { padding-left: 2px; }
.toolbar { display: flex; align-items: center; height: 27px; padding: 0 6px 0 3px; background: #efede0; border-radius: 2px; }
.toolbar .grip { margin-right: 3px; }
.tool-row > .toolbar:first-child { padding-right: 0; }
.tb { width: 23px; height: 23px; flex: none; border: 1px solid transparent; background: none; color: #b0ad9e; display: grid; place-items: center; }
.tb.narrow { width: 14px; }
.tb svg { width: 16px; height: 16px; fill: none; stroke: currentColor; stroke-width: 1.2; }
.tb.on { color: #000; }
.tb.nav { color: #000080; }
.tb.active { border-color: #316ac5; background: #e1e6e8; }
.tb .f { fill: currentColor; stroke: none; }
.tb .h { opacity: .8; }
.sep { width: 1px; height: 20px; margin: 0 4px 0 3px; background: #bcb8a7; flex: none; }
.select { position: relative; display: inline-block; flex: none; }
.select select { appearance: none; width: 100%; height: 100%; border: 1px solid #7f9db9; border-radius: 0; background: #fff; padding: 0 3px; display: block; }
.select svg { position: absolute; right: 2px; top: 2px; width: 15px; height: calc(100% - 4px); background: linear-gradient(#cddafb, #b7c9f5); fill: none; stroke: #4d6185; stroke-width: 2; pointer-events: none; }
.tool-select { width: 100px; height: 20px; font-weight: bold; }

/* work area */
.workspace { flex: 1; min-height: 0; display: flex; border-top: 1px solid #fff; }
.tree { width: 283px; flex: none; display: flex; flex-direction: column; padding: 2px 0 0 4px; border-right: 2px solid #222; }
.dock-head { height: 13px; display: flex; justify-content: flex-end; gap: 2px; padding-right: 10px; background: linear-gradient(#bbb7a6, #bbb7a6) 0 5px / 240px 1px no-repeat; }
.dock-head button { width: 12px; height: 12px; border: 1px solid; border-color: #fff #777 #777 #fff; background: #ece9d8; }
.tree-list { flex: 1; background: #fff; border: 2px solid #8a877a; border-right-color: #fff; border-bottom-color: #fff; }
.mdi { flex: 1; min-width: 0; display: flex; flex-direction: column; padding: 6px 7px 0 1px; }
.frame { flex: 1; min-height: 0; border: 1px solid #fff; border-right: 2px solid #222; border-bottom: 2px solid #222; padding: 4px 4px 4px 1px; display: flex; }
.viewport { flex: 1; min-width: 0; width: 100%; height: 100%; border: 1px solid #777; border-right: 2px solid #fff; border-bottom: 2px solid #fff; }
.mark { font: 300 18px Lato, sans-serif; }
.mark.big { font-size: 26px; }
.mdi-tabs { height: 25px; flex: none; padding-left: 116px; }
.mdi-tabs button { height: 21px; padding: 0 4px; border: solid #000; border-width: 0 2px 2px 1px; background: #ece9d8; }

/* bottom docks */
.bottom-dock { height: 52px; flex: none; display: flex; border-top: 1px solid #aca899; padding-top: 4px; box-shadow: inset 0 1px #fff, inset 0 5px #ece9d8, inset 0 6px #222; background: #ece9d8; border-bottom: 1px solid #aca899; }
.dock-tools { width: 14px; flex: none; padding: 6px 0 0 3px; display: flex; flex-direction: column; gap: 1px; }
.dock-tools button { height: 11px; border: 1px solid; border-color: #fff #888 #888 #fff; background: #ece9d8; font: bold 11px/8px "DejaVu Sans", sans-serif; }
.dock-tools span { width: 6px; height: 9px; margin-left: 2px; border: solid #c5c2b2; border-width: 0 1px; }
.param-list { width: 545px; flex: none; margin: 6px 6px 4px 2px; border: 1px solid #8a877a; border-bottom-color: #fff; border-right-color: #fff; position: relative; }
.param-list table { width: 100%; border-collapse: collapse; }
.param-list th { height: 18px; padding: 0 5px; text-align: left; font-weight: normal; border-bottom: 1px solid #000; border-left: 1px solid #aaa; }
.param-list .c-name { width: 418px; }
.mini-spin { position: absolute; right: 2px; top: 1px; width: 16px; display: grid; gap: 1px; padding-left: 1px; }
.mini-spin button { height: 8px; border: 0; background: #c3d3fb; color: #4d6185; font: 8px/8px "DejaVu Sans", sans-serif; }
.log-dock { flex: 1; min-width: 0; display: flex; gap: 3px; border-left: 2px solid #222; padding: 0 4px 4px 0; }
.log-dock .dock-tools { margin-left: 1px; }
.log { flex: 1; background: #fff; margin-top: 6px; border: 1px solid #777; border-right-color: #fff; border-bottom-color: #fff; display: flex; justify-content: flex-end; }
.log-scroll { width: 16px; display: grid; grid-template-rows: 1fr 1fr; gap: 1px; padding: 1px; }
.log-scroll button { border: 1px solid #e3e1d4; border-radius: 2px; background: #f3f2eb; display: grid; place-items: center; }
.log-scroll svg { width: 12px; height: 12px; fill: none; stroke: #c6c4b6; stroke-width: 2; }

/* status */
.status { height: 20px; flex: none; display: flex; align-items: center; border-top: 1px solid #fff; position: relative; white-space: nowrap; }
.status span { padding: 0 5px; border-right: 1px solid #d2cfbf; }
.status .ready { margin-right: auto; padding-left: 2px; border: 0; }
.status .unit { padding: 0 6px; }
.lang-bar { position: absolute; right: 72px; bottom: 0; width: 39px; height: 7px; border: 1px solid #667; border-bottom: 0; background: #fff; box-shadow: inset 0 -2px #7aa0e8; }

/* taskbar */
.taskbar { height: 30px; flex: none; display: flex; align-items: stretch; background: linear-gradient(#3f85f0, #2663e0 12%, #245edb 85%, #1b48b5); position: relative; z-index: 20; color: #fff; }
.start { width: 91px; flex: none; border: 0; border-radius: 0 10px 10px 0; color: #fff; background: linear-gradient(#6cba68, #3c9a3c 15%, #3b963b 80%, #277227); box-shadow: inset -3px 0 4px #236823; display: flex; align-items: center; gap: 4px; padding-left: 10px; font: italic 16px "Noto Sans CJK TC", sans-serif; text-shadow: 1px 1px #254; }
.start svg { width: 20px; height: 18px; }
.tasks { display: flex; gap: 2px; padding: 3px 0 3px 9px; flex: 1 1 0; min-width: 0; }
.tasks button { flex: 0 1 97px; min-width: 0; display: flex; align-items: center; gap: 4px; padding: 0 4px 0 10px; border: 0; border-radius: 3px; color: #fff; background: linear-gradient(#5f9bf8, #3d7ff0 20%, #3a7af0 80%, #2c66d8); white-space: nowrap; }
.tasks svg { width: 16px; height: 16px; flex: none; }
.tasks b { color: #f6e6b8; font-weight: bold; }
.tasks i { margin-left: auto; border: 3px solid transparent; border-top-color: #fff; border-bottom: 0; }
.tasks .current { background: #1c4cb4; box-shadow: inset 1px 1px 2px #0c2f80; }
.ime { display: flex; align-items: center; gap: 4px; flex: none; font: 14px/18px "Noto Sans CJK TC", sans-serif; padding-right: 12px; }
.ime svg { width: 16px; height: 18px; }
.ime .lines { width: 6px; }
.ime .teal { background: #14658f; }
.framed { background: #1b4a9c; outline: 1px solid #103a88; }
.tray { display: flex; align-items: center; gap: 2px; padding-right: 13px; flex: none; background: linear-gradient(#35b6f5, #1290e8 15%, #129bee 85%, #0e70c0); border-left: 1px solid #0a56b4; }
.tray svg { width: 16px; height: 16px; }
.tray .green { width: 12px; height: 13px; margin: 0 3px; }
.expand { width: 16px; height: 16px; margin-left: -8px; border: 0; border-radius: 50%; background: #2f8cf4; box-shadow: 0 0 0 1px #8cc4ff; display: grid; place-items: center; }
.expand svg { width: 14px; height: 14px; }
.tray time { padding-left: 5px; }

/* dialog window */
.dialog { position: absolute; left: 12px; top: 183px; width: 414px; height: 570px; z-index: 10; border: 3px solid #0842d0; border-top: 0; border-radius: 7px 7px 0 0; background: #ece9d8; font: 12px "DejaVu Sans Condensed", "Noto Sans", sans-serif; overflow: hidden; }
.dlg-title { height: 28px; margin: 0 -3px; padding: 0 5px 0 8px; display: flex; align-items: center; justify-content: space-between; background: linear-gradient(#0a5bdc, #3c90fa 6%, #0355e3 18%, #0256e8 55%, #0468fd 85%, #0344c4); }
.dlg-title h2 { font: bold 12px "Liberation Serif", serif; color: #fff; text-shadow: 1px 1px #0a1c70; }
.dlg-close { width: 21px; height: 21px; border: 1px solid #fff; border-radius: 3px; background: linear-gradient(135deg, #ee8b6c, #d4401e); display: grid; place-items: center; }
.dlg-close svg { width: 15px; height: 15px; }
.dlg-body { padding: 9px 13px 9px 12px; display: flex; flex-direction: column; gap: 5px; }
.top-part { display: flex; gap: 15px; }
fieldset { margin: 0; padding: 0; border: 1px solid #d0cfbf; border-radius: 4px; min-width: 0; }
legend { color: #0046d5; padding: 0 3px; margin-left: 4px; line-height: 16px; height: 16px; }
.general { flex: 1; padding: 5px 0 10px; }
.row { display: flex; align-items: center; height: 28px; padding-left: 12px; white-space: nowrap; }
.general .row { padding-left: 14px; }
.general .lead { width: 82px; }
.opt { display: flex; align-items: center; gap: 2px; white-space: nowrap; }
.w50 { width: 49px; } .w82 { width: 82px; } .w68 { width: 68px; } .w95 { width: 95px; }
.off { color: #aca899; }
.dialog input[type=radio] { appearance: none; width: 13px; height: 13px; border: 1px solid #21497c; border-radius: 50%; background: linear-gradient(135deg, #dcdcd5, #fff); }
.dialog input[type=radio]:checked { background: radial-gradient(circle, #2aa52a 0 2px, #f4f4f0 3px); }
.dialog input[type=radio]:disabled { border-color: #cac8bb; }
.dialog input[type=radio]:disabled:checked { background: radial-gradient(circle, #b6b4a6 0 2px, #f4f4f0 3px); }
.dialog input[type=checkbox] { appearance: none; width: 13px; height: 13px; border: 1px solid #1c5180; background: linear-gradient(135deg, #dcdcd7, #fff); display: grid; place-items: center; }
.dialog input[type=checkbox]:disabled { border-color: #cac8bb; background: #fff; }
.dialog input[type=checkbox]:checked::after { content: "✓"; font: bold 11px/11px "DejaVu Sans", sans-serif; }
.name-select { width: 124px; height: 22px; }
input[type=range] { appearance: none; width: 122px; height: 21px; background: linear-gradient(#9d9c99, #9d9c99) 0 10px / 100% 1px no-repeat, linear-gradient(#fff, #fff) 0 11px / 100% 1px no-repeat; }
input[type=range]::-webkit-slider-thumb { appearance: none; width: 11px; height: 21px; border: 1px solid #7b8f86; border-top: 3px solid #2fb24e; border-bottom: 3px solid #2fa046; border-radius: 2px; background: linear-gradient(90deg, #fff, #dcdcd2); }
.large { padding-left: 9px; }
.actions { width: 86px; padding-top: 5px; display: flex; flex-direction: column; gap: 4px; }
.actions button, .modes-grid > button { height: 24px; border: 1px solid #003c74; border-radius: 3px; background: linear-gradient(#fff, #f4f3ec 80%, #dcd8cc); }
.actions button:disabled, .modes-grid > button:disabled { border-color: #c9c7ba; color: #aca899; background: #f4f2e8; }
.actions .default { box-shadow: inset 0 0 0 2px #a9c1ee; outline: 1px dotted #444; outline-offset: -4px; }
.dialog input[type=text] { width: 100%; min-width: 0; height: 21px; border: 1px solid #7f9db9; border-radius: 0; padding: 0 3px 1px 2px; background: #fff; }
.dialog input[readonly], .dialog input[type=text]:disabled { background: #ebe8d7; }
.dialog input[type=text]:disabled { color: #aca899; }
.position { padding-bottom: 12px; }
.position .lead { width: 94px; }
.coords { display: grid; grid-template-columns: 40px 54px 23px 54px 14px 42px 54px 23px 54px; row-gap: 10px; align-items: center; padding: 6px 0 0 12px; }
.c6 { grid-column: 6; }
.op { text-align: center; }
.free { grid-column: 2 / 6; }
.coords .wide { grid-column: 7 / 10; }
.refplane { padding-bottom: 8px; }
.refplane label { width: 143px; flex: none; }
.refplane input[type=text] { width: 105px; }
.modes-grid { display: grid; grid-template-columns: 202px 1fr; grid-template-rows: 18px 30px 26px 22px 26px; align-items: center; padding: 3px 0 10px 13px; }
.modes-grid > button { width: 106px; margin-left: 1px; }
.spin { width: 109px; height: 23px; display: flex; background: #fff; border: 1px solid #7f9db9; }
.dialog .spin input[type=text] { border: 0; background: none; }
.arrows { display: grid; width: 15px; flex: none; gap: 1px; padding: 1px 1px 1px 0; }
.arrows button { border: 0; background: #c3d3fb; display: grid; place-items: center; min-height: 0; }
.arrows svg { width: 14px; height: 9px; fill: #4d6185; }
.dialog input.angle { width: 109px; height: 23px; }
```
